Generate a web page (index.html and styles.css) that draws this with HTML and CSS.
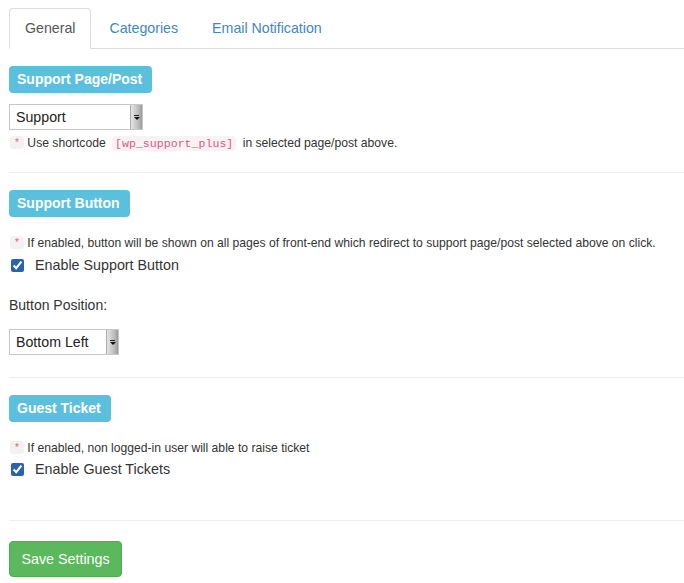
FILE: index.html
```html
<!DOCTYPE html>
<html>
<head>
<meta charset="utf-8">
<link rel="stylesheet" href="styles.css">
</head>
<body>
<div class="page">
  <ul class="tabs">
    <li class="tab active"><a>General</a></li>
    <li class="tab"><a>Categories</a></li>
    <li class="tab"><a>Email Notification</a></li>
  </ul>

  <section class="block first">
    <div><span class="label">Support Page/Post</span></div>
    <div class="select w134"><select><option>Support</option></select><span class="arrow"></span></div>
    <div class="note note-tight"><span class="star">*</span> Use shortcode <code>[wp_support_plus]</code> in selected page/post above.</div>
  </section>

  <hr class="divider">

  <section class="block">
    <div><span class="label">Support Button</span></div>
    <div class="note"><span class="star">*</span> If enabled, button will be shown on all pages of front-end which redirect to support page/post selected above on click.</div>
    <label class="check"><input type="checkbox" checked> Enable Support Button</label>
    <div class="field-label">Button Position:</div>
    <div class="select w110"><select><option>Bottom Left</option></select><span class="arrow"></span></div>
  </section>

  <hr class="divider d2">

  <section class="block">
    <div><span class="label">Guest Ticket</span></div>
    <div class="note"><span class="star">*</span> If enabled, non logged-in user will able to raise ticket</div>
    <label class="check check-tight"><input type="checkbox" checked> Enable Guest Tickets</label>
  </section>

  <hr class="divider d3">

  <button class="btn-save">Save Settings</button>
</div>
</body>
</html>
```

FILE: styles.css
```css
html, body {
  margin: 0;
  padding: 0;
  background: #fff;
}
body {
  font-family: "Liberation Sans", Arial, sans-serif;
  font-size: 14px;
  color: #333;
  line-height: 20px;
}
.page {
  padding: 8px 0 0 9px;
}
.tabs {
  list-style: none;
  margin: 0;
  padding: 0;
  display: flex;
  border-bottom: 1px solid #ddd;
}
.tab {
  margin-right: 2px;
  margin-bottom: -1px;
}
.tab a {
  display: block;
  padding: 10px 15px 10px 15px;
  line-height: 19px;
  font-size: 14.2px;
  border: 1px solid transparent;
  border-radius: 4px 4px 0 0;
  color: #3f88c5;
}
.tab.active a {
  color: #555;
  background: #fff;
  border-color: #ddd #ddd transparent #ddd;
}
.block.first {
  margin-top: 17px;
}
.label {
  display: inline-block;
  background: #5bc0de;
  color: #fff;
  font-weight: bold;
  font-size: 14px;
  line-height: 27px;
  height: 27px;
  padding: 0 10px 0 8px;
  border-radius: 4px;
  vertical-align: top;
}
.block > div:first-child {
  height: 27px;
}
.select {
  display: flex;
  height: 26px;
  box-sizing: border-box;
  border: 1px solid #c6c6c6;
  background: #fff;
  margin-top: 11px;
}
.w134 { width: 134px; }
.w110 { width: 110px; margin-top: 14px; }
.select select {
  appearance: none;
  -webkit-appearance: none;
  border: none;
  background: transparent;
  font-family: "Liberation Sans", Arial, sans-serif;
  font-size: 14.2px;
  color: #222;
  padding: 0 0 0 6px;
  flex: 1;
  min-width: 0;
  outline: none;
}
.arrow {
  width: 11px;
  background: linear-gradient(to right, #e6e6e6, #b9b9b9 70%, #9a9a9a);
  border-left: 1px solid #aaa;
  display: flex;
  align-items: center;
  justify-content: center;
  flex-direction: column;
}
.arrow::before {
  content: "";
  width: 5px;
  height: 1px;
  background: #222;
  margin-bottom: 1px;
}
.arrow::after {
  content: "";
  border-left: 3px solid transparent;
  border-right: 3px solid transparent;
  border-top: 3px solid #111;
}
.note {
  font-size: 12.15px;
  line-height: 17px;
  height: 17px;
  color: #333;
  margin-top: 18px;
}
.note-tight {
  margin-top: 5px;
}
.star {
  display: inline-block;
  background: #f3f1f1;
  color: #e06565;
  font-size: 10px;
  line-height: 13px;
  width: 14px;
  text-align: center;
  border-radius: 3px;
  margin-left: 1px;
  vertical-align: 1px;
}
code {
  font-family: "Liberation Mono", "Courier New", monospace;
  font-size: 11.6px;
  color: #d1607e;
  background: #f9f2f4;
  padding: 1px 3px;
  border-radius: 4px;
  margin: 0 3px;
}
.check {
  display: flex;
  align-items: center;
  margin-top: 3px;
  line-height: 20px;
  height: 20px;
  font-size: 14.3px;
}
.check-tight {
  margin-top: 2px;
}
.check input {
  width: 13px;
  height: 13px;
  margin: 0 11px 0 2px;
  accent-color: #2a62b0;
}
.field-label {
  margin-top: 20px;
  line-height: 20px;
  height: 20px;
}
.divider {
  border: 0;
  border-top: 1px solid #eee;
  margin: 20px 0 17px;
}
.d2 { margin-top: 22px; }
.d3 { margin-top: 41px; margin-bottom: 20px; }
.btn-save {
  display: block;
  font-family: "Liberation Sans", Arial, sans-serif;
  font-size: 14.3px;
  color: #fff;
  background: #5cb85c;
  border: 1px solid #4cae4c;
  border-radius: 4px;
  height: 36px;
  width: 113px;
  padding: 0;
}
```
